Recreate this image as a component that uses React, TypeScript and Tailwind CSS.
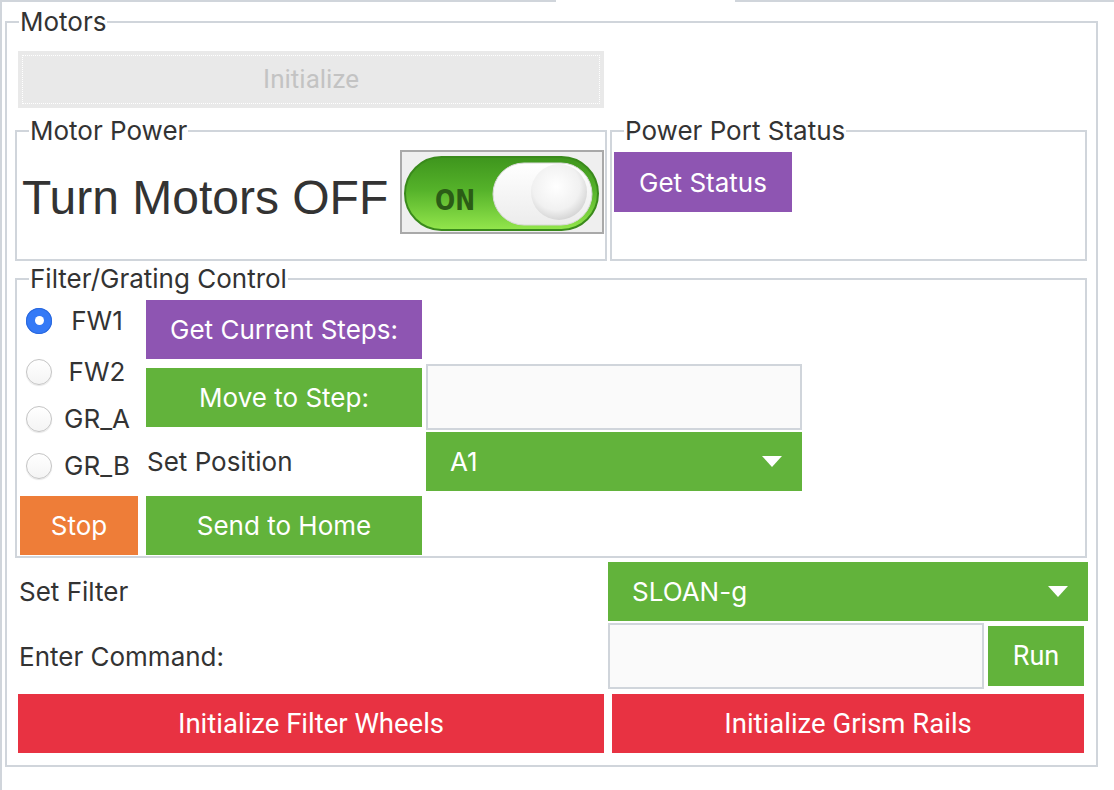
import React from 'react';

const line = 'border-[#d0d5db]';

function Group({
  title,
  className = '',
  legendClass = 'ml-[12px]',
  children,
}: {
  title: string;
  className?: string;
  legendClass?: string;
  children?: React.ReactNode;
}) {
  return (
    <fieldset className={`border-2 ${line} min-w-0 ${className}`}>
      <legend className={`${legendClass} px-[1px] text-[26px] leading-[28px] text-[#333]`}>{title}</legend>
      {children}
    </fieldset>
  );
}

function Btn({
  children,
  className = '',
}: {
  children: React.ReactNode;
  className?: string;
}) {
  return (
    <button className={`flex items-center justify-center text-white ${className}`}>
      {children}
    </button>
  );
}

function Caret() {
  return (
    <svg width="20" height="11" viewBox="0 0 20 11">
      <path d="M0 0 H20 L10 11 Z" fill="#fff" />
    </svg>
  );
}

function Select({ value, className = '' }: { value: string; className?: string }) {
  return (
    <div className={`flex items-center justify-between bg-[#62b33b] text-white text-[26px] pl-[24px] pr-[20px] ${className}`}>
      <span>{value}</span>
      <Caret />
    </div>
  );
}

function Radio({ label, checked }: { label: string; checked?: boolean }) {
  return (
    <div className="flex items-center h-[47px]">
      {checked ? (
        <span className="ml-[6px] w-[26px] h-[26px] rounded-full bg-[#3479f6] flex items-center justify-center shadow-[inset_0_0_0_1px_#2a68dc]">
          <span className="w-[9px] h-[9px] rounded-full bg-white" />
        </span>
      ) : (
        <span className="ml-[6px] w-[26px] h-[26px] rounded-full bg-gradient-to-b from-white to-[#f4f4f4] border border-[#c4c4c4] shadow-[0_1px_1px_rgba(0,0,0,0.1)]" />
      )}
      <span className="flex-1 ml-[4px] text-center text-[26px] text-[#333]">{label}</span>
    </div>
  );
}

function Toggle() {
  return (
    <div className="w-[204px] h-[84px] border-2 border-[#a9a9a9] bg-[#efefef]">
      <svg width="200" height="80" viewBox="0 0 200 80">
        <defs>
          <linearGradient id="pill" x1="0" y1="0" x2="0" y2="1">
            <stop offset="0" stopColor="#3e951d" />
            <stop offset="0.45" stopColor="#55b22a" />
            <stop offset="1" stopColor="#93e64c" />
          </linearGradient>
          <linearGradient id="knob" x1="0" y1="0" x2="0" y2="1">
            <stop offset="0" stopColor="#ffffff" />
            <stop offset="1" stopColor="#ececec" />
          </linearGradient>
          <radialGradient id="ball" cx="0.45" cy="0.4" r="0.6">
            <stop offset="0" stopColor="#ffffff" />
            <stop offset="0.7" stopColor="#f1f1f1" />
            <stop offset="1" stopColor="#d6d6d6" />
          </radialGradient>
        </defs>
        <rect x="3" y="5" width="193" height="73" rx="36.5" fill="url(#pill)" stroke="#3a8a1c" strokeWidth="2" />
        <text
          x="33"
          y="58"
          textLength="40"
          lengthAdjust="spacingAndGlyphs"
          fill="#2b5c16"
          fontSize="28"
          fontWeight="700"
          fontFamily="'DejaVu Sans Condensed', 'Liberation Sans', sans-serif"
        >
          ON
        </text>
        <rect x="91" y="11" width="99" height="62" rx="31" fill="url(#knob)" stroke="#d8d8d8" strokeWidth="1" />
        <circle cx="157" cy="40" r="28" fill="url(#ball)" />
      </svg>
    </div>
  );
}

export default function App() {
  return (
    <div className="w-[1114px] h-[790px] bg-white overflow-hidden font-['Inter',sans-serif] text-[#333]">
      {/* tab strip border */}
      <div className="flex h-[2px]">
        <div className="w-[556px] bg-[#d0d5db]" />
        <div className="w-[179px]" />
        <div className="flex-1 bg-[#d0d5db]" />
      </div>

      <div className={`h-[788px] border-l-2 ${line} pt-[6px] pl-[3px]`}>
        <Group title="Motors" legendClass="ml-[4px]" className="w-[1093px] pl-[8px] pr-[8px] pb-[12px]">
          {/* Initialize (disabled) */}
          <button className="mt-[15px] ml-[3px] w-[586px] h-[57px] bg-[#e9e9e9] text-[#c3c3c3] text-[26px] font-['Roboto',sans-serif] outline-dotted outline-1 outline-white outline-offset-[-5px]">
            Initialize
          </button>

          {/* power row */}
          <div className="mt-[9px] flex">
            <Group title="Motor Power" className="w-[592px] h-[144px]">
              <div className="flex items-start justify-between pl-[5px] pr-[1px]">
                <span className="mt-[25px] text-[48px] leading-[55px] font-['Liberation_Sans',sans-serif] text-[#333]">
                  Turn Motors OFF
                </span>
                <div className="mt-[5px]">
                  <Toggle />
                </div>
              </div>
            </Group>
            <Group title="Power Port Status" className="ml-[3px] w-[477px] h-[144px]">
              <Btn className="mt-[7px] ml-[2px] w-[178px] h-[60px] bg-[#8e55b2] text-[26px]">Get Status</Btn>
            </Group>
          </div>

          {/* filter / grating */}
          <Group title="Filter/Grating Control" className="mt-[4px] w-[1072px] h-[293px]">
            <div className="flex">
              <div className="ml-[3px] w-[118px] mt-[3px] flex flex-col">
                <div className="h-[49px] flex flex-col justify-center">
                  <Radio label="FW1" checked />
                </div>
                <div className="mt-[3px]">
                  <Radio label="FW2" />
                  <Radio label="GR_A" />
                  <Radio label="GR_B" />
                </div>
                <Btn className="mt-[7px] h-[59px] bg-[#ee7d38] text-[26px]">Stop</Btn>
              </div>

              <div className="ml-[8px] w-[276px] mt-[7px] flex flex-col">
                <Btn className="h-[59px] bg-[#8e55b2] text-[26px]">Get Current Steps:</Btn>
                <Btn className="mt-[9px] h-[59px] bg-[#62b33b] text-[26px]">Move to Step:</Btn>
                <div className="mt-[5px] h-[59px] flex items-center pl-[1px] text-[26px] text-[#333]">
                  Set Position
                </div>
                <Btn className="mt-[5px] h-[59px] bg-[#62b33b] text-[26px]">Send to Home</Btn>
              </div>

              <div className="ml-[4px] w-[376px] mt-[71px] flex flex-col">
                <div className={`h-[66px] border-2 ${line} bg-[#fafafa]`} />
                <Select value="A1" className="mt-[2px] h-[59px]" />
              </div>
            </div>
          </Group>

          {/* set filter */}
          <div className="mt-[4px] flex items-center">
            <span className="ml-[4px] flex-1 text-[26px] text-[#333]">Set Filter</span>
            <Select value="SLOAN-g" className="w-[480px] h-[59px]" />
          </div>

          {/* command */}
          <div className="mt-[2px] flex items-center">
            <span className="ml-[4px] flex-1 text-[26px] text-[#333]">Enter Command:</span>
            <div className="w-[480px] flex items-center">
              <div className={`w-[376px] h-[66px] border-2 ${line} bg-[#fafafa]`} />
              <Btn className="ml-[4px] w-[96px] h-[60px] bg-[#62b33b] text-[27px] font-['Roboto',sans-serif]">Run</Btn>
            </div>
          </div>

          {/* init buttons */}
          <div className="mt-[5px] flex ml-[3px]">
            <Btn className="w-[586px] h-[59px] bg-[#e83242] text-[27.5px] font-['Roboto',sans-serif]">
              Initialize Filter Wheels
            </Btn>
            <Btn className="ml-[8px] w-[472px] h-[59px] bg-[#e83242] text-[27.5px] font-['Roboto',sans-serif]">
              Initialize Grism Rails
            </Btn>
          </div>
        </Group>
      </div>
    </div>
  );
}
